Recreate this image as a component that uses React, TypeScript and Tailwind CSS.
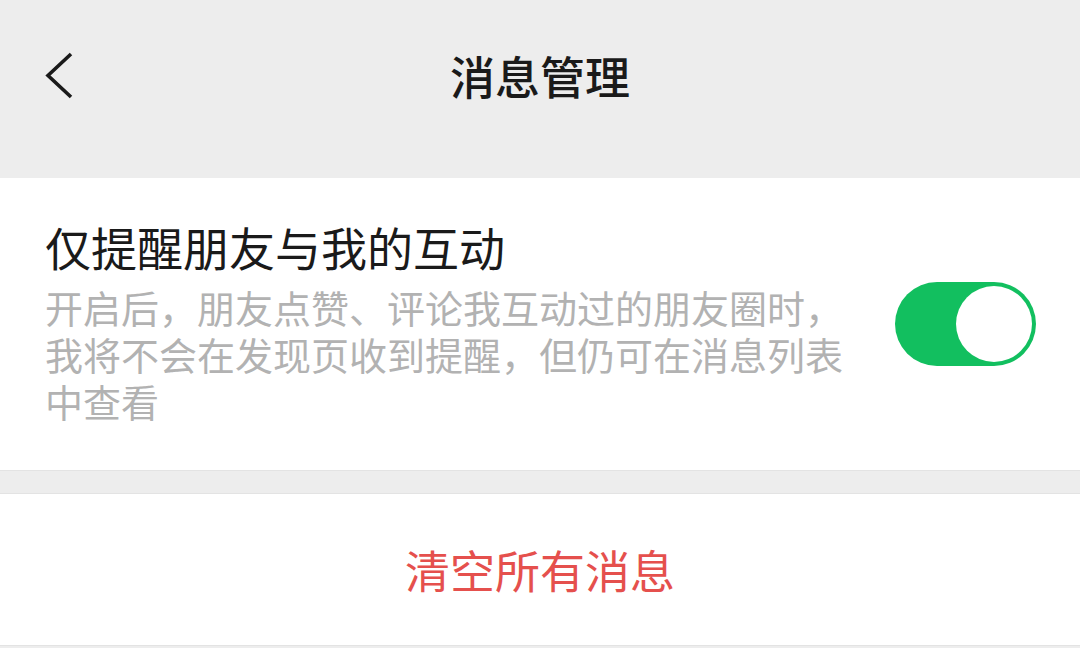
import React from "react";

export default function App() {
  const font = { fontFamily: '"Noto Sans CJK SC", "Noto Sans", sans-serif' };
  return (
    <div className="w-[1080px] h-[648px] bg-[#ededed] overflow-hidden flex flex-col" style={font}>
      {/* Header */}
      <div className="relative h-[178px] flex items-center justify-center">
        <svg
          className="absolute left-[40px] top-[48px]"
          width="40"
          height="56"
          viewBox="0 0 40 56"
        >
          <polyline
            points="31,6 8,27.5 31,49"
            fill="none"
            stroke="#1a1a1a"
            strokeWidth="3.6"
            strokeLinecap="butt"
            strokeLinejoin="miter"
          />
        </svg>
        <div className="text-[45px] leading-none font-medium text-[#1a1a1a] -mt-[28px]">消息管理</div>
      </div>

      {/* Setting row */}
      <div className="bg-white h-[293px] flex items-center justify-between pl-[45px] pr-[44px] border-b border-[#e3e3e3]">
        <div className="flex flex-col gap-[10px] pb-[6px]">
          <div className="text-[46px] leading-[54px] text-[#1a1a1a]">仅提醒朋友与我的互动</div>
          <div className="w-[815px] text-[38px] leading-[47px] text-[#b2b2b2]">
            开启后，朋友点赞、评论我互动过的朋友圈时，我将不会在发现页收到提醒，但仍可在消息列表中查看
          </div>
        </div>
        <div className="w-[141px] h-[84px] rounded-full bg-[#12bf5f] flex items-center justify-end pr-[4px] shrink-0">
          <div className="w-[76px] h-[76px] rounded-full bg-white" />
        </div>
      </div>

      {/* Gap band */}
      <div className="h-[22px] bg-[#ededed]" />

      {/* Clear messages */}
      <div className="bg-white h-[153px] flex items-center justify-center border-t border-[#e3e3e3] border-b">
        <div className="text-[45px] leading-none text-[#e5504d]">清空所有消息</div>
      </div>
    </div>
  );
}
